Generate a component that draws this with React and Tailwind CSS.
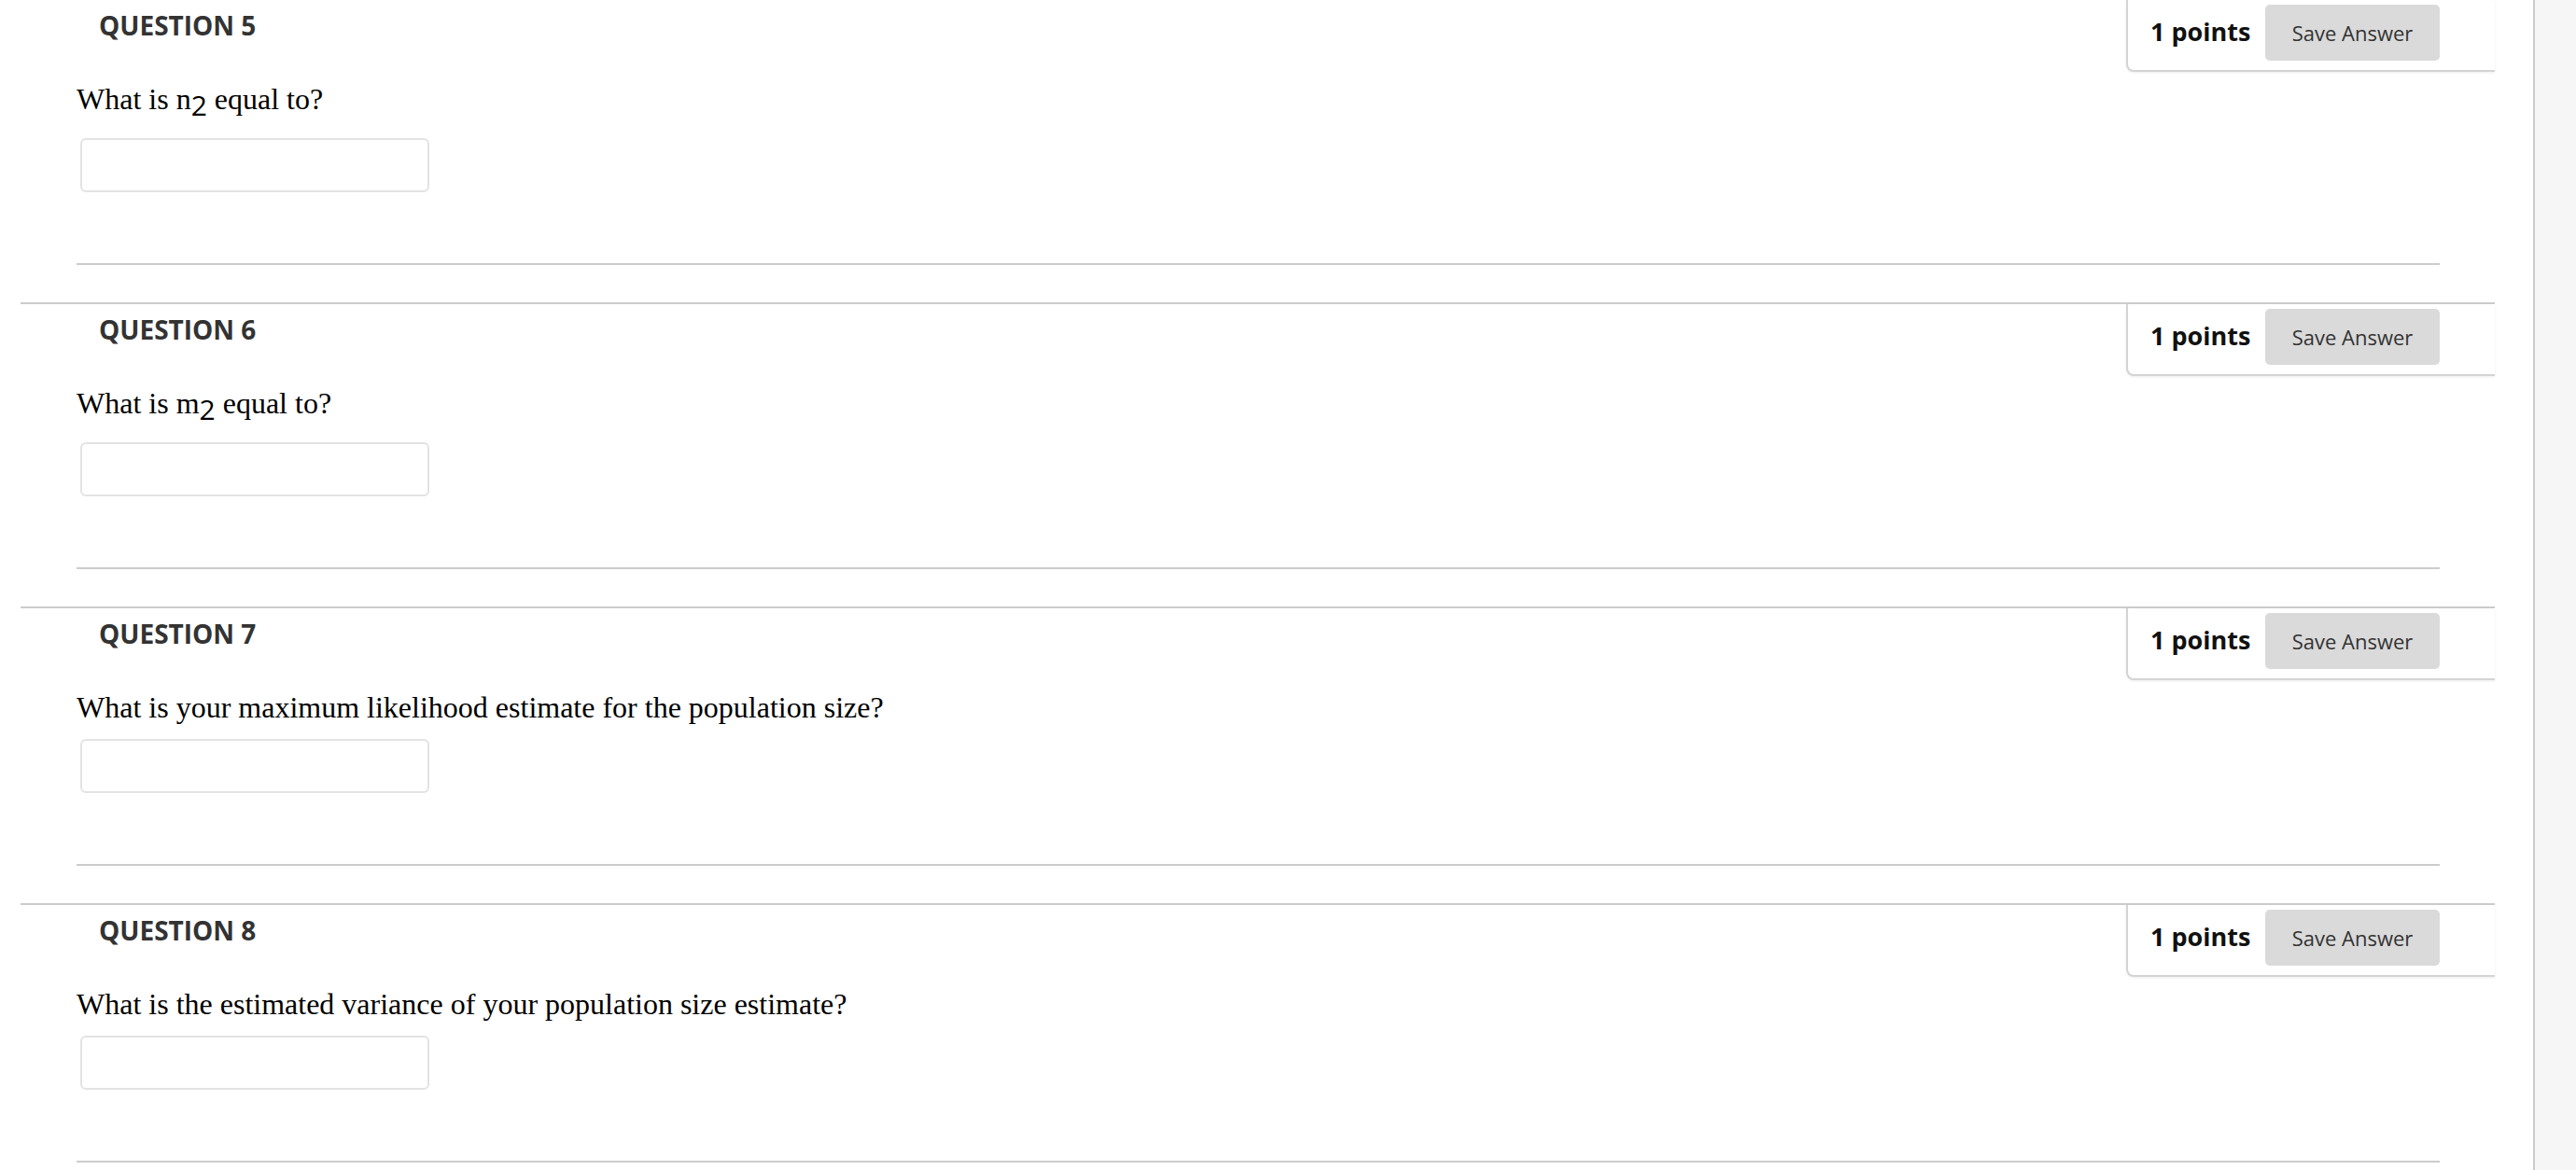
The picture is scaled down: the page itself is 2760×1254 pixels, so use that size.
import React from 'react';

const questions = [
  { num: 5, pre: 'What is n', sub: '2', post: ' equal to?' },
  { num: 6, pre: 'What is m', sub: '2', post: ' equal to?' },
  { num: 7, pre: 'What is your maximum likelihood estimate for the population size?' },
  { num: 8, pre: 'What is the estimated variance of your population size estimate?' },
];

const QuestionBlock = ({ q }) => {
  return (
    <section className="border-t-2 border-[#cccccc] pb-[40px]">
      {/* Header: title + points box */}
      <div className="flex items-start justify-between">
        <h2 className="pl-[84px] pt-[13px] font-['Open_Sans',sans-serif] text-[28px] font-bold leading-[28px] text-[#333333]">
          QUESTION {q.num}
        </h2>
        <div className="flex w-[395px] items-center rounded-bl-[8px] border-b-2 border-l-2 border-[#d4d4d4] bg-white pb-[10px] pl-[24px] pr-[59px] pt-[5px] shadow-[0_1px_3px_rgba(0,0,0,0.08)]">
          <span className="-mt-[3px] font-['Open_Sans',sans-serif] text-[27px] font-bold leading-[28px] text-[#111111]">
            1 points
          </span>
          <button className="ml-auto h-[60px] w-[187px] rounded-[5px] bg-[#dadada] font-['Open_Sans',sans-serif] text-[22px] leading-[22px] text-[#333333]">
            Save Answer
          </button>
        </div>
      </div>

      {/* Body */}
      <div className="ml-[60px] mr-[59px]">
        <p className="mt-[9px] font-['Liberation_Serif',serif] text-[32px] leading-[40px] text-black">
          {q.pre}
          {q.sub && (
            <span className="relative top-[7px] font-['Open_Sans',sans-serif] text-[30px] leading-[0]">
              {q.sub}
            </span>
          )}
          {q.post}
        </p>
        <input
          type="text"
          className={
            (q.sub ? 'mt-[22px] ' : 'mt-[14px] ') +
            'ml-[4px] block h-[58px] w-[374px] rounded-[6px] border-2 border-[#e3e3e3] bg-white outline-none'
          }
        />
        <div className="mt-[76px] border-b-2 border-[#cccccc]" />
      </div>
    </section>
  );
};

export default function App() {
  return (
    <div className="flex h-screen overflow-hidden bg-white">
      <main className="min-w-0 flex-1 pl-[22px] pr-[41px]">
        <div className="-mt-[2px]">
          {questions.map((q) => (
            <QuestionBlock key={q.num} q={q} />
          ))}
        </div>
      </main>
      {/* scrollbar track */}
      <div className="h-full w-[46px] border-l-2 border-[#cbcbcb] bg-[#f6f6f6]" />
    </div>
  );
}
